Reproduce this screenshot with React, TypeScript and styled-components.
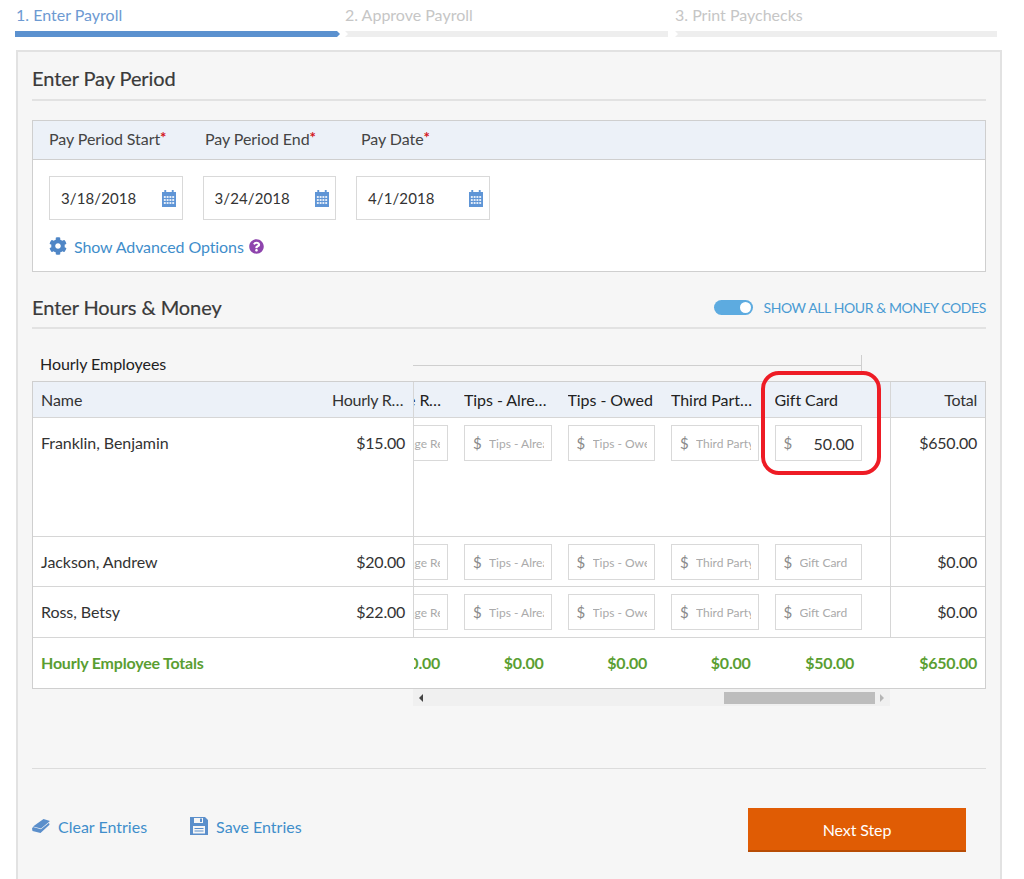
import React from "react";
import styled, { createGlobalStyle } from "styled-components";
import { FaCog, FaQuestionCircle } from "react-icons/fa";

const GlobalStyle = createGlobalStyle`
  html, body {
    margin: 0;
    padding: 0;
    background: #fff;
    overflow: hidden;
    font-family: "Lato", "Liberation Sans", sans-serif;
    color: #333;
  }
  * { box-sizing: border-box; }
`;

const Page = styled.div`
  width: 1024px;
  height: 879px;
  overflow: hidden;
  padding: 6px 0 0 15px;
`;

const Steps = styled.div`
  display: flex;
  height: 31px;
  margin-bottom: 13px;
`;

const Step = styled.div<{ $width: number; $gap: number; $active?: boolean; $first?: boolean }>`
  width: ${(p) => p.$width}px;
  margin-right: ${(p) => p.$gap}px;
  display: flex;
  flex-direction: column;
  justify-content: space-between;
  span {
    padding-left: ${(p) => (p.$first ? 1 : 0)}px;
    font-size: 16px;
    line-height: 18px;
    color: ${(p) => (p.$active ? "#6d9ad2" : "#c6c6c6")};
  }
  i {
    display: block;
    height: 6px;
    background: ${(p) => (p.$active ? "#5b91cf" : "#eeeeee")};
    clip-path: ${(p) =>
      p.$first
        ? "polygon(0 0, calc(100% - 3px) 0, 100% 50%, calc(100% - 3px) 100%, 0 100%)"
        : "polygon(0 0, 100% 0, 100% 100%, 0 100%, 3px 50%)"};
  }
`;

const Panel = styled.div`
  width: 986px;
  height: 900px;
  margin-left: 1px;
  padding: 14px 14px;
  background: #f6f6f6;
  border: 2px solid #e2e2e2;
`;

const SectionHead = styled.div<{ $pad: number }>`
  display: flex;
  align-items: center;
  justify-content: space-between;
  padding-bottom: ${(p) => p.$pad}px;
  border-bottom: 2px solid #e2e2e2;
`;

const SectionTitle = styled.h2`
  margin: 0;
  font-size: 20px;
  line-height: 24px;
  font-weight: 400;
  letter-spacing: -0.08px;
  color: #3a3a3a;
  -webkit-text-stroke: 0.2px #3a3a3a;
`;

const PeriodCard = styled.div`
  margin: 19px 0 23px;
  height: 152px;
  background: #fff;
  border: 1px solid #cfcfcf;
`;

const PeriodLabels = styled.div`
  display: grid;
  grid-template-columns: repeat(3, 156px);
  height: 39px;
  align-items: center;
  padding: 0 0 4px 16px;
  background: #ecf1f8;
  border-bottom: 1px solid #cfcfcf;
  font-size: 16px;
  letter-spacing: -0.06px;
  color: #444;
  b {
    color: #d3141b;
    font-size: 15px;
    line-height: 10px;
    vertical-align: 2px;
  }
`;

const DateRow = styled.div`
  display: flex;
  gap: 20px;
  padding: 16px 0 0 16px;
`;

const DateField = styled.div`
  width: 133.5px;
  height: 44px;
  display: flex;
  align-items: center;
  justify-content: space-between;
  padding: 0 6px 0 11px;
  border: 1px solid #d9d9d9;
  font-size: 15px;
  letter-spacing: 0.1px;
  color: #333;
`;

const OptionsLink = styled.div`
  display: flex;
  align-items: center;
  margin: 16px 0 0 16px;
  height: 20px;
  font-size: 16px;
  letter-spacing: -0.1px;
  color: #3f8ecb;
  svg:first-child {
    color: #4f86c6;
    margin-right: 7px;
  }
  svg:last-child {
    color: #8e44ad;
    margin-left: 5px;
  }
`;

const Toggle = styled.div`
  display: flex;
  align-items: center;
  gap: 10px;
  font-size: 14px;
  color: #4a9bd3;
  letter-spacing: -0.4px;
`;

const Track = styled.div`
  width: 39px;
  height: 15px;
  display: flex;
  justify-content: flex-end;
  align-items: center;
  padding-right: 2px;
  border-radius: 8px;
  background: #5dabe0;
  &::after {
    content: "";
    width: 11px;
    height: 11px;
    border-radius: 50%;
    background: #fff;
  }
`;

const Caption = styled.div`
  display: flex;
  height: 26px;
  margin-top: 26px;
`;

const CaptionText = styled.div`
  width: 381px;
  padding-left: 8px;
  font-size: 16px;
  line-height: 18px;
  letter-spacing: -0.06px;
  color: #222;
`;

const CaptionRule = styled.div`
  width: 449px;
  height: 17px;
  border-right: 1px solid #cfcfcf;
  &::before {
    content: "";
    display: block;
    margin-top: 10px;
    border-top: 1px solid #cfcfcf;
  }
`;

const TableWrap = styled.div`
  position: relative;
`;

const Table = styled.div`
  background: #fff;
  border: 1px solid #cfcfcf;
  font-size: 16px;
  letter-spacing: -0.06px;
`;

const Row = styled.div<{ $height: number; $head?: boolean; $last?: boolean }>`
  display: grid;
  grid-template-columns: 381px 476px 95px;
  height: ${(p) => p.$height}px;
  background: ${(p) => (p.$head ? "#ecf1f8" : "transparent")};
  border-bottom: ${(p) => (p.$last ? "none" : "1px solid #d6d6d6")};
  color: ${(p) => (p.$last ? "#5a9e32" : "#333")};
  font-weight: ${(p) => (p.$last ? 700 : 400)};
  letter-spacing: ${(p) => (p.$last ? "-0.2px" : "inherit")};
`;

const Frozen = styled.div<{ $line?: boolean; $head?: boolean }>`
  display: flex;
  justify-content: space-between;
  padding: ${(p) => (p.$head ? "0 8px" : "7px 8px 0")};
  line-height: 36px;
  border-right: 1px solid ${(p) => (p.$line ? "#d6d6d6" : "transparent")};
  overflow: hidden;
`;

const Amount = styled.span`
  letter-spacing: -0.25px;
`;

const RateHead = styled.span`
  width: 73px;
  white-space: nowrap;
  overflow: hidden;
  text-overflow: ellipsis;
  text-align: right;
  letter-spacing: -0.25px;
`;

const Scroller = styled.div<{ $head?: boolean }>`
  display: flex;
  justify-content: flex-end;
  gap: 16px;
  padding: ${(p) => (p.$head ? 0 : 7)}px 28px 0 0;
  overflow: hidden;
`;

const HeadCell = styled.div`
  flex: 0 0 87.5px;
  line-height: 36px;
  color: #222;
  white-space: nowrap;
  overflow: hidden;
  text-overflow: ellipsis;
`;

const MoneyBox = styled.label`
  flex: 0 0 87.5px;
  height: 36px;
  display: flex;
  align-items: center;
  padding: 0 7px 0 8px;
  background: #fff;
  border: 1px solid #d9d9d9;
  color: #8a8a8a;
  span {
    width: 16px;
    flex: none;
    font-size: 15px;
  }
  input {
    min-width: 0;
    width: 100%;
    padding: 0;
    border: 0;
    outline: 0;
    background: transparent;
    text-align: right;
    font: 16px "Lato", sans-serif;
    letter-spacing: -0.1px;
    color: #333;
  }
  input:placeholder-shown {
    text-align: left;
    font-size: 12px;
    letter-spacing: 0;
  }
  input::placeholder {
    color: #aaa;
    opacity: 1;
  }
`;

const TotalCell = styled.div`
  flex: 0 0 87.5px;
  line-height: 36px;
  padding-right: 8px;
  text-align: right;
  white-space: nowrap;
  letter-spacing: -0.25px;
`;

const RightCell = styled.div<{ $line?: boolean; $head?: boolean }>`
  padding: ${(p) => (p.$head ? 0 : 7)}px 8px 0 0;
  line-height: 36px;
  text-align: right;
  letter-spacing: -0.25px;
  border-left: 1px solid ${(p) => (p.$line ? "#d6d6d6" : "transparent")};
`;

const ScrollBar = styled.div`
  display: flex;
  align-items: center;
  justify-content: space-between;
  width: 477px;
  height: 17px;
  margin-left: 381px;
  padding: 0 6px;
  background: #f0f0f0;
`;

const Arrow = styled.i<{ $right?: boolean }>`
  width: 0;
  height: 0;
  border-top: 4px solid transparent;
  border-bottom: 4px solid transparent;
  border-left: ${(p) => (p.$right ? "4px solid #b5b5b5" : "none")};
  border-right: ${(p) => (p.$right ? "none" : "4px solid #444")};
`;

const Thumb = styled.div`
  width: 151px;
  height: 12px;
  margin: 0 5px 0 auto;
  background: #bdbdbd;
`;

const Highlight = styled.div`
  position: absolute;
  left: 729px;
  top: -10px;
  width: 120px;
  height: 104px;
  border: 4px solid #ee1c25;
  border-radius: 18px;
  pointer-events: none;
`;

const Footer = styled.div`
  display: flex;
  align-items: center;
  margin-top: 62px;
  padding: 39px 20px 0 0;
  border-top: 1px solid #dcdcdc;
`;

const FooterLink = styled.div`
  display: flex;
  align-items: center;
  gap: 8px;
  margin: 0 43px 8px 0;
  font-size: 16px;
  color: #3f8ecb;
`;

const NextButton = styled.button`
  width: 218px;
  height: 44px;
  margin-left: auto;
  border: 0;
  border-bottom: 2px solid #b84c05;
  background: #e05c04;
  color: #fff;
  font: 16px "Lato", sans-serif;
  letter-spacing: -0.1px;
`;

const CalendarIcon = () => (
  <svg width="14" height="18" viewBox="0 0 15 18" preserveAspectRatio="none" fill="#5f95d6">
    <path d="M0 3h2.5V1h2v2h6V1h2v2H15v15H0z" />
    <g fill="#e3ecf8">
      {[7, 10, 13].map((y) =>
        [2, 5, 8, 11].map((x) => <rect key={`${x}-${y}`} x={x} y={y} width="2" height="2" />)
      )}
    </g>
  </svg>
);

const EraserIcon = () => (
  <svg width="18" height="15" viewBox="0 0 18 15" fill="#5b8fcb">
    <path d="M11.5 0 18 2 9 9.5 1 7.5z" />
    <path d="M0 9.5 1 8l8 2.3 8-6.5.5 2L8.5 14 0.5 12z" />
  </svg>
);

const SaveIcon = () => (
  <svg width="18" height="18" viewBox="0 0 18 18" fill="#5b8fcb">
    <path d="M0 0h15l3 3v15H0z" />
    <rect x="4" y="1" width="9" height="5" fill="#f6f6f6" />
    <rect x="10" y="1.5" width="2" height="3.5" />
    <rect x="3" y="9" width="12" height="7.5" fill="#f6f6f6" />
    <rect x="4.5" y="11" width="9" height="1" />
    <rect x="4.5" y="13.5" width="9" height="1" />
  </svg>
);

const columns = ["Mileage Reimbursement", "Tips - Already Paid", "Tips - Owed", "Third Party Sick", "Gift Card"];
const placeholders = ["Mileage Reimb", "Tips - Already", "Tips - Owed", "Third Party Sick", "Gift Card"];

const employees = [
  { name: "Franklin, Benjamin", rate: "$15.00", total: "$650.00", gift: "50.00", height: 119 },
  { name: "Jackson, Andrew", rate: "$20.00", total: "$0.00", gift: "", height: 50 },
  { name: "Ross, Betsy", rate: "$22.00", total: "$0.00", gift: "", height: 51 },
];

const totals = ["$0.00", "$0.00", "$0.00", "$0.00", "$50.00"];

export default function App() {
  return (
    <Page>
      <GlobalStyle />
      <Steps>
        <Step $width={325} $gap={5} $active $first>
          <span>1. Enter Payroll</span>
          <i />
        </Step>
        <Step $width={323} $gap={7}>
          <span>2. Approve Payroll</span>
          <i />
        </Step>
        <Step $width={322} $gap={0}>
          <span>3. Print Paychecks</span>
          <i />
        </Step>
      </Steps>

      <Panel>
        <SectionHead $pad={9}>
          <SectionTitle>Enter Pay Period</SectionTitle>
        </SectionHead>

        <PeriodCard>
          <PeriodLabels>
            <span>Pay Period Start<b>*</b></span>
            <span>Pay Period End<b>*</b></span>
            <span>Pay Date<b>*</b></span>
          </PeriodLabels>
          <DateRow>
            {["3/18/2018", "3/24/2018", "4/1/2018"].map((date) => (
              <DateField key={date}>
                {date}
                <CalendarIcon />
              </DateField>
            ))}
          </DateRow>
          <OptionsLink>
            <FaCog size={18} />
            Show Advanced Options
            <FaQuestionCircle size={15} />
          </OptionsLink>
        </PeriodCard>

        <SectionHead $pad={8}>
          <SectionTitle>Enter Hours &amp; Money</SectionTitle>
          <Toggle>
            <Track />
            SHOW ALL HOUR &amp; MONEY CODES
          </Toggle>
        </SectionHead>

        <Caption>
          <CaptionText>Hourly Employees</CaptionText>
          <CaptionRule />
        </Caption>

        <TableWrap>
          <Table>
            <Row $height={36} $head>
              <Frozen $line $head>
                <span>Name</span>
                <RateHead>Hourly Rate</RateHead>
              </Frozen>
              <Scroller $head>
                {columns.map((col) => (
                  <HeadCell key={col}>{col}</HeadCell>
                ))}
              </Scroller>
              <RightCell $line $head>Total</RightCell>
            </Row>

            {employees.map((emp) => (
              <Row key={emp.name} $height={emp.height}>
                <Frozen $line>
                  <span>{emp.name}</span>
                  <Amount>{emp.rate}</Amount>
                </Frozen>
                <Scroller>
                  {columns.map((col, i) => (
                    <MoneyBox key={col}>
                      <span>$</span>
                      <input
                        placeholder={placeholders[i]}
                        defaultValue={i === 4 ? emp.gift : ""}
                      />
                    </MoneyBox>
                  ))}
                </Scroller>
                <RightCell $line>{emp.total}</RightCell>
              </Row>
            ))}

            <Row $height={50} $last>
              <Frozen>
                <span>Hourly Employee Totals</span>
              </Frozen>
              <Scroller>
                {totals.map((val, i) => (
                  <TotalCell key={i}>{val}</TotalCell>
                ))}
              </Scroller>
              <RightCell>$650.00</RightCell>
            </Row>
          </Table>
          <ScrollBar>
            <Arrow />
            <Thumb />
            <Arrow $right />
          </ScrollBar>
          <Highlight />
        </TableWrap>

        <Footer>
          <FooterLink>
            <EraserIcon />
            Clear Entries
          </FooterLink>
          <FooterLink>
            <SaveIcon />
            Save Entries
          </FooterLink>
          <NextButton>Next Step</NextButton>
        </Footer>
      </Panel>
    </Page>
  );
}
